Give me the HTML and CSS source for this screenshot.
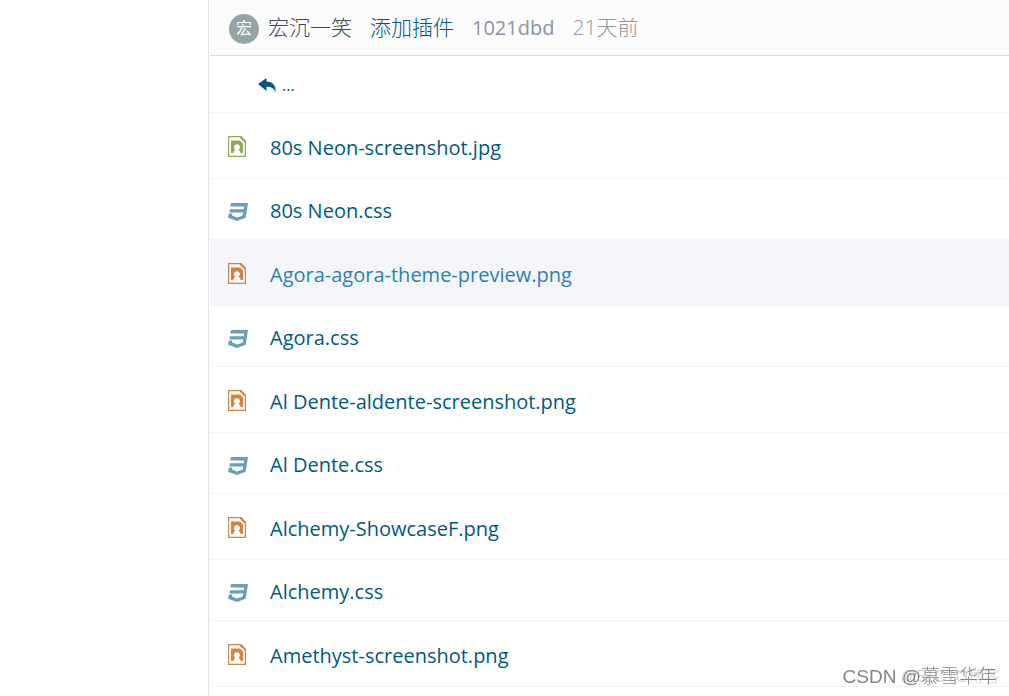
FILE: index.html
```html
<!DOCTYPE html>
<html lang="zh-CN">
<head>
<meta charset="utf-8">
<title>文件列表</title>
<link rel="stylesheet" href="styles.css">
</head>
<body>
<svg class="symbols" aria-hidden="true">
  <symbol id="image" viewBox="0 0 18 21">
    <path d="M.6.6h12l4.800 4.800v15H.6z" fill="none" stroke="currentColor" stroke-width="1.200"/>
    <path d="M12 .5v1.500l4.300 4.300H18V5L13.200 0z" fill="currentColor"/>
    <path fill="currentColor" fill-rule="evenodd" d="M3 4.500h9l3 3V17h-2.500c0-1.700-.8-2.500-2.200-3.200a3 3 0 1 0-2.800 0C6.100 14.500 5.500 15.300 5.500 17H3z"/>
  </symbol>
  <symbol id="css" viewBox="0 0 20 18">
    <path fill="currentColor" d="M3 0h17l-2.300 14.700L9 18 0 14.700 .8 10.500h3.500l-.3 2 5.300 2 5.300-2 .5-3H1.500L2 6.300h13.700l.5-2.800H2.300z"/>
  </symbol>
</svg>
<main class="files">
  <header class="commit">
    <span class="avatar">宏</span>
    <a class="author" href="#">宏沉一笑</a>
    <a class="message" href="#">添加插件</a>
    <a class="meta" href="#">1021dbd</a>
    <time class="meta">21天前</time>
  </header>
  <a class="up" href="#"><svg class="reply" viewBox="0 0 18 15" aria-hidden="true"><path fill="currentColor" d="M0 6 8.500 0v3.500C14.500 3.500 18 7 17.500 14.500 16 10 13 8.800 8.500 8.800V13z"/></svg><span>...</span></a>
  <ul class="list">
    <li class="row picture jpg"><svg class="icon"><use href="#image"/></svg><a href="#">80s Neon-screenshot.jpg</a></li>
    <li class="row css"><svg class="icon"><use href="#css"/></svg><a href="#">80s Neon.css</a></li>
    <li class="row picture active"><svg class="icon"><use href="#image"/></svg><a href="#">Agora-agora-theme-preview.png</a></li>
    <li class="row css"><svg class="icon"><use href="#css"/></svg><a href="#">Agora.css</a></li>
    <li class="row picture"><svg class="icon"><use href="#image"/></svg><a href="#">Al Dente-aldente-screenshot.png</a></li>
    <li class="row css"><svg class="icon"><use href="#css"/></svg><a href="#">Al Dente.css</a></li>
    <li class="row picture"><svg class="icon"><use href="#image"/></svg><a href="#">Alchemy-ShowcaseF.png</a></li>
    <li class="row css"><svg class="icon"><use href="#css"/></svg><a href="#">Alchemy.css</a></li>
    <li class="row picture"><svg class="icon"><use href="#image"/></svg><a href="#">Amethyst-screenshot.png</a></li>
  </ul>
</main>
<div class="mark ghost">@51CTO博客</div>
<div class="mark">CSDN @慕雪华年</div>
</body>
</html>
```

FILE: styles.css
```css
* { box-sizing: border-box; }
body {
  margin: 0;
  background: #fff;
  font-family: "Open Sans", "Noto Sans CJK SC", sans-serif;
  font-size: 20px;
  line-height: 28px;
}
a { color: #005980; text-decoration: none; }
.symbols { position: absolute; width: 0; height: 0; }
.files {
  margin-left: 208px;
  min-height: 100vh;
  border-left: 1px solid #e1e4ea;
  padding-left: 1px;
}
.commit {
  display: flex;
  align-items: center;
  height: 56px;
  padding: 0 19px;
  background: #fcfcfc;
  border-bottom: 1px solid #dcddde;
  font-size: 21px;
  font-weight: 300;
}
.avatar {
  width: 30px;
  height: 30px;
  margin: 2px 9px 0 0;
  border-radius: 50%;
  background: #95a5a6;
  color: #fff;
  font-size: 16px;
  font-weight: 400;
  line-height: 28px;
  text-align: center;
}
.author,
.message {
  margin-right: 18px;
  padding-bottom: 2px;
}
.author { color: #40485b; }
.meta { margin-right: 18px; color: #8c92a4; font-size: 20px; font-weight: 400; }
time.meta { color: #969696; font-weight: 300; padding-bottom: 2px; font-size: 21px; }
.up {
  display: flex;
  align-items: center;
  height: 57px;
  padding: 2px 0 0 48px;
  gap: 6px;
  border-bottom: 1px solid #eff2f6;
  font-size: 16px;
}
.reply { width: 18px; height: 15px; }
.list { margin: 0; padding: 0; list-style: none; }
.row {
  display: flex;
  align-items: center;
  gap: 22px;
  padding: 18px 18px 14px;
  border-bottom: 1px solid #eff2f6;
}
.icon { flex: none; width: 20px; height: 18px; margin-top: 2px; color: #6a9fb5; }
.picture { padding: 21px 18px 16px; gap: 24px; }
.picture .icon { width: 18px; height: 21px; color: #d28445; margin: 0 0 4px; }
.jpg .icon { color: #90a959; }
.active { background: #f5f6fa; }
.active a { color: #2980b9; }
.mark {
  position: fixed;
  right: 12px;
  bottom: 5px;
  color: #868686;
  font-family: "Liberation Sans", "Noto Sans CJK SC", sans-serif;
  font-size: 19px;
  font-weight: 300;
  white-space: nowrap;
}
.ghost { right: 9px; color: #d4d4d4; font-size: 16px; }
```
